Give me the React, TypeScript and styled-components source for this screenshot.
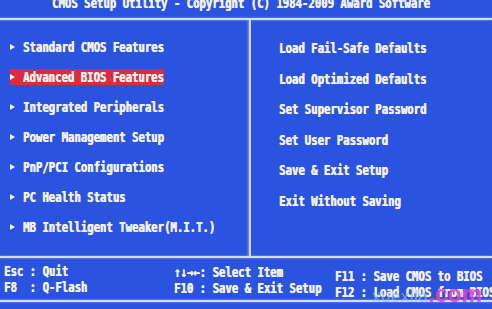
import React from "react";
import styled, { createGlobalStyle } from "styled-components";

const BLUE = "#2a54df";
const INK = "#f1f1ea";
const CHAR_W = 6.4;

const Global = createGlobalStyle`
  html, body { margin: 0; padding: 0; background: ${BLUE}; }
`;

const Screen = styled.div`
  position: relative;
  width: 492px;
  height: 309px;
  overflow: hidden;
  background: ${BLUE};
  color: ${INK};
  font-family: "DejaVu Sans Mono", "Liberation Mono", monospace;
  font-weight: bold;
  font-size: 14px;
  display: flex;
  flex-direction: column;
  text-shadow: 0.6px 0 0 ${INK}, 0 0 1px rgba(255, 255, 255, 0.4);
`;

const Title = styled.div`
  height: 18px;
  line-height: 7px;
  padding-left: 52px;
  white-space: pre;
`;

const Rule = styled.div`
  height: 2px;
  flex: none;
  background: #d3daf4;
  box-shadow: 0 0 2px rgba(220, 230, 255, 0.7);
`;

const Main = styled.div`
  height: 236px;
  flex: none;
  display: grid;
  grid-template-columns: 249px 1fr;
`;

const LeftMenu = styled.div`
  display: flex;
  flex-direction: column;
  padding-top: 12px;
`;

const RightMenu = styled.div`
  display: flex;
  flex-direction: column;
  padding-top: 13px;
  padding-left: 28px;
  border-left: 2px solid #cdd5f2;
  box-shadow: -1px 0 2px rgba(220, 230, 255, 0.5);
`;

const LeftRow = styled.div`
  height: 30px;
  display: flex;
  align-items: center;
  padding-left: 10px;
`;

const RightRow = styled.div`
  height: 30.5px;
  display: flex;
  align-items: center;
  line-height: 16px;
`;

const Item = styled.div<{ $active?: boolean }>`
  display: inline-flex;
  align-items: center;
  height: 16px;
  line-height: 16px;
  background: ${(p) => (p.$active ? "#dc2a3e" : "transparent")};
`;

const Arrow = styled.span`
  width: 0;
  height: 0;
  border-left: 5px solid ${INK};
  border-top: 3.5px solid transparent;
  border-bottom: 3.5px solid transparent;
  margin-right: 8px;
`;

const Footer = styled.div`
  height: 42px;
  flex: none;
  display: grid;
  grid-template-columns: 170px 161px 1fr;
  padding-left: 4px;
`;

const KeyCol = styled.div<{ $top: number }>`
  display: flex;
  flex-direction: column;
  padding-top: ${(p) => p.$top}px;
  line-height: 16px;
`;

const Squeeze = styled.span<{ $w: number }>`
  display: inline-block;
  width: ${(p) => p.$w}px;
  white-space: pre;
`;

const Inner = styled.span`
  display: inline-block;
  transform: scaleX(0.76);
  transform-origin: 0 50%;
`;

const Watermark = styled.div`
  position: absolute;
  right: 10px;
  bottom: 1px;
  display: flex;
  align-items: baseline;
  font-family: "Liberation Sans", Arial, sans-serif;
  text-shadow: none;
`;

const WmSite = styled.span`
  font-size: 17px;
  font-weight: normal;
  color: rgba(140, 190, 255, 0.7);
  letter-spacing: 0.5px;
`;

const WmCom = styled.span`
  font-size: 23px;
  font-weight: bold;
  color: rgba(236, 58, 200, 0.9);
`;

function T({ children }: { children: string }) {
  return (
    <Squeeze $w={children.length * CHAR_W}>
      <Inner>{children}</Inner>
    </Squeeze>
  );
}

const leftItems = [
  "Standard CMOS Features",
  "Advanced BIOS Features",
  "Integrated Peripherals",
  "Power Management Setup",
  "PnP/PCI Configurations",
  "PC Health Status",
  "MB Intelligent Tweaker(M.I.T.)",
];

const rightItems = [
  "Load Fail-Safe Defaults",
  "Load Optimized Defaults",
  "Set Supervisor Password",
  "Set User Password",
  "Save & Exit Setup",
  "Exit Without Saving",
];

const keys: { top: number; lines: string[] }[] = [
  { top: 5, lines: ["Esc : Quit", "F8  : Q-Flash"] },
  { top: 6, lines: ["↑↓→←: Select Item", "F10 : Save & Exit Setup"] },
  { top: 10, lines: ["F11 : Save CMOS to BIOS", "F12 : Load CMOS from BIOS"] },
];

export default function App() {
  return (
    <>
      <Global />
      <Screen>
        <Title>
          <T>CMOS Setup Utility - Copyright (C) 1984-2009 Award Software</T>
        </Title>
        <Rule />
        <Main>
          <LeftMenu>
            {leftItems.map((label, i) => (
              <LeftRow key={label}>
                <Item $active={i === 1}>
                  <Arrow />
                  <T>{label}</T>
                </Item>
              </LeftRow>
            ))}
          </LeftMenu>
          <RightMenu>
            {rightItems.map((label) => (
              <RightRow key={label}>
                <T>{label}</T>
              </RightRow>
            ))}
          </RightMenu>
        </Main>
        <Rule />
        <Footer>
          {keys.map((col, i) => (
            <KeyCol key={i} $top={col.top}>
              {col.lines.map((l) => (
                <div key={l}>
                  <T>{l}</T>
                </div>
              ))}
            </KeyCol>
          ))}
        </Footer>
        <Rule />
        <Watermark>
          <WmSite>xuexila</WmSite>
          <WmCom>.com</WmCom>
        </Watermark>
      </Screen>
    </>
  );
}
